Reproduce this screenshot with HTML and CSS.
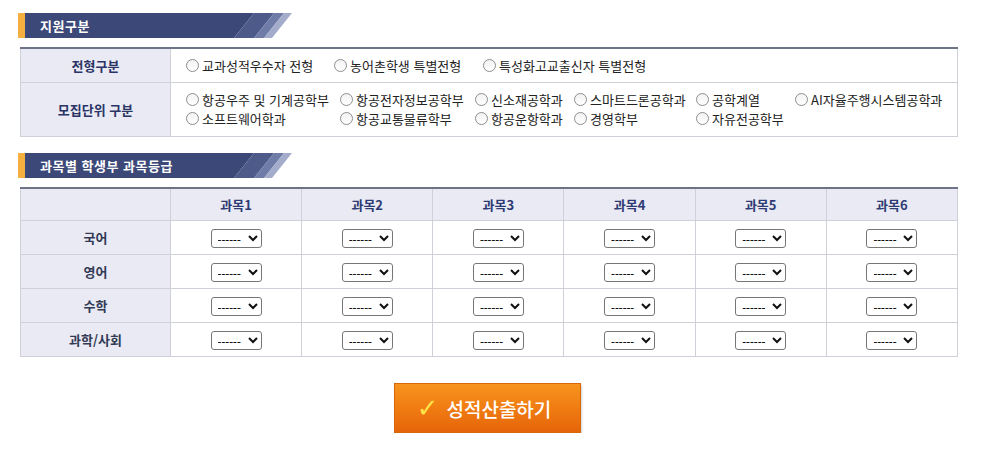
FILE: index.html
```html
<!DOCTYPE html>
<html lang="ko">
<head>
<meta charset="utf-8">
<link rel="stylesheet" href="styles.css">
</head>
<body>
<div class="page">
  <div class="sec-title">
    <svg class="sec-bg" width="274" height="25" viewBox="0 0 274 25">
      <rect x="0" y="0" width="7" height="25" fill="#f6b040"/>
      <polygon points="7,0 236,0 216,25 7,25" fill="#3c4878"/>
      <polygon points="236,0 256,0 236,25 216,25" fill="#4d5a8a"/>
      <polygon points="256,0 266,0 246,25 236,25" fill="#6f7ca7"/>
      <polygon points="266,0 274,0 254,25 246,25" fill="#a3acca"/>
    </svg>
    <span class="sec-text">지원구분</span>
  </div>

  <table class="tbl tbl-info">
    <colgroup><col class="c-label"><col></colgroup>
    <tr class="r1">
      <th>전형구분</th>
      <td>
        <div class="opts opts-1">
          <label class="opt"><span class="rd"></span>교과성적우수자 전형</label>
          <label class="opt"><span class="rd"></span>농어촌학생 특별전형</label>
          <label class="opt"><span class="rd"></span>특성화고교출신자 특별전형</label>
        </div>
      </td>
    </tr>
    <tr class="r2">
      <th>모집단위 구분</th>
      <td>
        <div class="opts opts-2">
          <label class="opt"><span class="rd"></span>항공우주 및 기계공학부</label>
          <label class="opt"><span class="rd"></span>항공전자정보공학부</label>
          <label class="opt"><span class="rd"></span>신소재공학과</label>
          <label class="opt"><span class="rd"></span>스마트드론공학과</label>
          <label class="opt"><span class="rd"></span>공학계열</label>
          <label class="opt"><span class="rd"></span>AI자율주행시스템공학과</label>
          <label class="opt"><span class="rd"></span>소프트웨어학과</label>
          <label class="opt"><span class="rd"></span>항공교통물류학부</label>
          <label class="opt"><span class="rd"></span>항공운항학과</label>
          <label class="opt"><span class="rd"></span>경영학부</label>
          <label class="opt"><span class="rd"></span>자유전공학부</label>
        </div>
      </td>
    </tr>
  </table>

  <div class="sec-title sec-2">
    <svg class="sec-bg" width="274" height="25" viewBox="0 0 274 25">
      <rect x="0" y="0" width="7" height="25" fill="#f6b040"/>
      <polygon points="7,0 236,0 216,25 7,25" fill="#3c4878"/>
      <polygon points="236,0 256,0 236,25 216,25" fill="#4d5a8a"/>
      <polygon points="256,0 266,0 246,25 236,25" fill="#6f7ca7"/>
      <polygon points="266,0 274,0 254,25 246,25" fill="#a3acca"/>
    </svg>
    <span class="sec-text">과목별 학생부 과목등급</span>
  </div>

  <table class="tbl tbl-grade">
    <colgroup>
      <col class="c-label">
      <col class="c-sub"><col class="c-sub"><col class="c-sub"><col class="c-sub"><col class="c-sub"><col class="c-sub">
    </colgroup>
    <tr class="hd">
      <th></th><th>과목1</th><th>과목2</th><th>과목3</th><th>과목4</th><th>과목5</th><th>과목6</th>
    </tr>
    <tr>
      <th>국어</th>
      <td><select><option>------</option></select></td>
      <td><select><option>------</option></select></td>
      <td><select><option>------</option></select></td>
      <td><select><option>------</option></select></td>
      <td><select><option>------</option></select></td>
      <td><select><option>------</option></select></td>
    </tr>
    <tr>
      <th>영어</th>
      <td><select><option>------</option></select></td>
      <td><select><option>------</option></select></td>
      <td><select><option>------</option></select></td>
      <td><select><option>------</option></select></td>
      <td><select><option>------</option></select></td>
      <td><select><option>------</option></select></td>
    </tr>
    <tr>
      <th>수학</th>
      <td><select><option>------</option></select></td>
      <td><select><option>------</option></select></td>
      <td><select><option>------</option></select></td>
      <td><select><option>------</option></select></td>
      <td><select><option>------</option></select></td>
      <td><select><option>------</option></select></td>
    </tr>
    <tr>
      <th>과학/사회</th>
      <td><select><option>------</option></select></td>
      <td><select><option>------</option></select></td>
      <td><select><option>------</option></select></td>
      <td><select><option>------</option></select></td>
      <td><select><option>------</option></select></td>
      <td><select><option>------</option></select></td>
    </tr>
  </table>

  <div class="btn-wrap">
    <button class="calc-btn" type="button"><span class="chk">✓</span>성적산출하기</button>
  </div>
</div>
</body>
</html>
```

FILE: styles.css
```css
html, body {
  margin: 0;
  padding: 0;
  background: #ffffff;
}
body {
  font-family: "Noto Sans CJK KR", "Noto Sans", sans-serif;
  font-size: 13px;
  color: #333333;
}
.page {
  padding: 13px 0 0 18px;
  width: 942px;
}
.sec-title {
  position: relative;
  width: 274px;
  height: 25px;
  display: flex;
  align-items: center;
}
.sec-bg {
  position: absolute;
  left: 0;
  top: 0;
  display: block;
}
.sec-text {
  position: relative;
  padding-left: 22px;
  color: #ffffff;
  font-weight: bold;
  font-size: 13px;
  line-height: 25px;
  letter-spacing: 0.5px;
}
.sec-2 {
  margin-top: 16px;
}
.tbl {
  border-collapse: collapse;
  margin-left: 2px;
  width: 938px;
  table-layout: fixed;
  border-top: 2px solid #6e7388;
}
.c-label {
  width: 150px;
}
.tbl th, .tbl td {
  border: 1px solid #cfd0d8;
  padding: 0;
}
.tbl th {
  background: #e9eaf3;
  color: #2b3466;
  font-weight: bold;
  font-size: 13px;
}
.tbl td {
  background: #ffffff;
}
.tbl-info {
  margin-top: 9px;
}
.tbl-info tr.r1 { height: 34px; }
.tbl-info tr.r2 { height: 54px; }
.tbl-info td {
  padding-left: 15px;
}
.opts {
  display: grid;
  align-items: center;
  row-gap: 0;
}
.opts-1 {
  grid-template-columns: 148px 149px auto;
}
.opts-2 {
  grid-template-columns: 154px 135px 99px 122px 99px auto;
}
.opt {
  display: flex;
  align-items: center;
  white-space: nowrap;
  line-height: 19px;
  color: #222222;
  font-size: 13px;
}
.rd {
  display: inline-block;
  width: 11px;
  height: 11px;
  border: 1px solid #8e8e8e;
  border-radius: 50%;
  background: linear-gradient(#f2f2f2, #ffffff);
  margin-right: 3px;
  flex: none;
}
.tbl-grade {
  margin-top: 9px;
}
.tbl-grade th, .tbl-grade td {
  text-align: center;
}
.tbl-grade tr { height: 34px; }
.tbl-grade tr.hd { height: 33px; }
.tbl-grade tr.hd th {
  color: #2e3a74;
}
.tbl-grade th {
  color: #333a55;
}
.tbl-grade select {
  width: 51px;
  height: 19px;
  font-size: 12px;
  font-family: "Noto Sans", sans-serif;
  border: 1px solid #767676;
  border-radius: 3px;
  background: #ffffff;
  color: #111;
  padding: 0 0 0 2px;
  vertical-align: middle;
}
.btn-wrap {
  display: flex;
  justify-content: center;
  padding-top: 26px;
  padding-right: 4px;
}
.calc-btn {
  width: 187px;
  height: 50px;
  border: 1px solid #d8670a;
  background: linear-gradient(#f7941d 0%, #f07c12 50%, #e5650a 100%);
  color: #ffffff;
  font-family: "Noto Sans CJK KR", sans-serif;
  font-size: 19px;
  font-weight: 500;
  display: flex;
  align-items: center;
  justify-content: center;
  box-shadow: 1px 2px 2px rgba(0,0,0,0.18);
  cursor: pointer;
  padding: 0 6px 0 0;
}
.chk {
  color: #ffe34a;
  font-family: "DejaVu Sans", sans-serif;
  font-weight: bold;
  font-size: 26px;
  line-height: 1;
  margin-right: 8px;
}
```
